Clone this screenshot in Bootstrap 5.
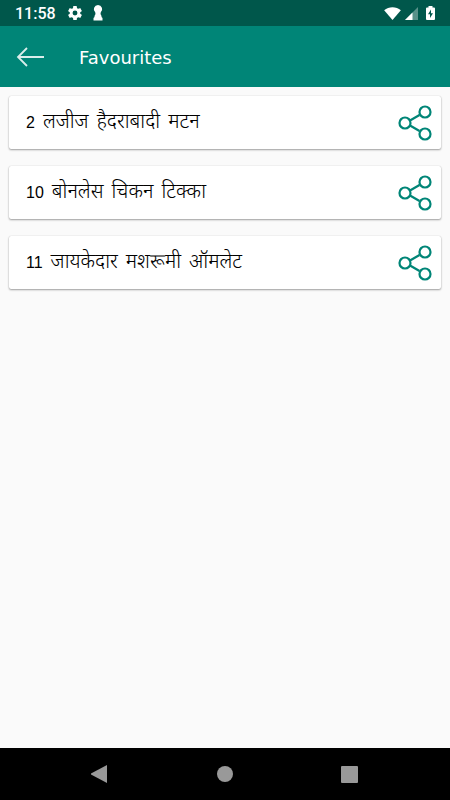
<!DOCTYPE html>
<html lang="hi">
<head>
<meta charset="utf-8">
<meta name="viewport" content="width=device-width, initial-scale=1">
<title>Favourites</title>
<link href="https://cdn.jsdelivr.net/npm/bootstrap@5.3.0/dist/css/bootstrap.min.css" rel="stylesheet">
<style>
body { background: #fafafa; font-family: Roboto, "Noto Sans", sans-serif; }
svg { display: block; flex: none; }
.status-bar { background: #00574b; color: #fff; padding: 0 15px; height: 26px; }
.clock { font-size: 16px; line-height: 24px; padding-top: 2px; font-weight: 500; margin-right: 12px; }
.app-bar { background: #008577; height: 61px; padding: 0 16px; gap: 34px; }
.app-title { font: 18px/24px "DejaVu Sans", sans-serif; color: #fff; padding-top: 2px; }
.recipes { padding: 9px; gap: 17px; }
.recipe { border: 0; border-radius: 2px; height: 53px; padding: 0 8px 0 17px; box-shadow: 0 1px 2px rgba(0,0,0,.36), 0 0 1px rgba(0,0,0,.2); }
.recipe-link { gap: 8px; font: 300 20px/24px "Noto Sans Devanagari", "Noto Sans", sans-serif; color: #000; padding-top: 1px; }
.recipe-number { font: 16px/24px "Liberation Sans", sans-serif; }
.nav-bar { background: #000; height: 52px; padding: 0 91px 0 90px; }
</style>
<script src="https://cdn.jsdelivr.net/npm/bootstrap@5.3.0/dist/js/bootstrap.bundle.min.js"></script>
</head>
<body class="d-flex flex-column min-vh-100">
<svg class="d-none" aria-hidden="true"><symbol id="share" viewBox="0 0 36 36"><g fill="none" stroke="#008577" stroke-width="2.200"><path d="M13 15.500 22.500 10M13 20.500 22.500 26"/><circle cx="8" cy="18" r="5.500"/><circle cx="28" cy="7" r="5.500"/><circle cx="28" cy="29" r="5.500"/></g></symbol></svg>
<div class="status-bar d-flex align-items-center">
  <span class="clock">11:58</span>
  <svg width="14" height="14" viewBox="2 2 20 20" fill="#fff" aria-hidden="true"><path d="M19.430 12.980c.04-.32.070-.64.070-.98s-.03-.66-.07-.98l2.110-1.650c.19-.15.24-.42.120-.64l-2-3.460c-.12-.22-.39-.3-.61-.22l-2.490 1c-.52-.4-1.080-.73-1.690-.98l-.38-2.650A.49.490 0 0 0 14 2h-4c-.25 0-.46.180-.49.420l-.38 2.650c-.61.250-1.170.590-1.690.980l-2.490-1c-.23-.09-.49 0-.61.220l-2 3.460c-.13.220-.07.490.120.640l2.110 1.650c-.04.320-.07.650-.07.980s.03.660.070.980l-2.110 1.650c-.19.150-.24.420-.12.640l2 3.460c.12.220.39.300.61.220l2.490-1c.52.400 1.080.730 1.690.980l.38 2.650c.03.240.24.420.49.420h4c.25 0 .46-.18.490-.42l.38-2.650c.61-.25 1.170-.59 1.690-.98l2.490 1c.23.090.49 0 .61-.22l2-3.460c.12-.22.070-.49-.12-.64zM12 15.500a3.500 3.500 0 1 1 0-7 3.500 3.500 0 0 1 0 7z"/></svg>
  <svg class="ms-2" width="16" height="16" viewBox="0 0 16 16" fill="#fff" aria-hidden="true"><path d="M8 0a4.200 4.200 0 0 1 2.800 7.300L10.500 9l1 2v1l1 1v2.500h-9V13l1-1v-1l1-2-.3-1.700A4.200 4.200 0 0 1 8 0z"/></svg>
  <svg class="ms-auto" width="17" height="13" viewBox="0 0 18 14" fill="#fff" aria-hidden="true"><path d="M0 3.500C5-.8 13-.8 18 3.500L9 14z"/></svg>
  <svg class="ms-1" width="13" height="13" viewBox="0 0 13 13" fill="#fff" aria-hidden="true"><path opacity=".35" d="M13 0v13H0z"/><path d="M7.500 5.500V13H0z"/></svg>
  <svg class="ms-2" width="9" height="14" viewBox="0 0 9 14" aria-hidden="true"><path fill="#fff" d="M2.500 0h4v1.500H8q1 0 1 1V13q0 1-1 1H1q-1 0-1-1V2.500q0-1 1-1h1.500z"/><path fill="#00574b" d="M5 3.500 2 8.300h2V12l3-4.800H5z"/></svg>
</div>
<header class="app-bar d-flex align-items-center">
  <button class="btn p-0 border-0" type="button" aria-label="Back"><svg width="29" height="20" viewBox="0 0 29 20" fill="none" stroke="#fff" stroke-opacity=".85" stroke-width="1.800" aria-hidden="true"><path d="M11 1 2 10l9 9M2 10h26"/></svg></button>
  <h1 class="app-title m-0">Favourites</h1>
</header>
<main class="recipes d-flex flex-column flex-grow-1">
  <article class="recipe card flex-row align-items-center justify-content-between">
    <a class="recipe-link d-flex text-decoration-none" href="#r2"><span class="recipe-number">2</span> <span>लजीज</span> <span>हैदराबादी</span> <span>मटन</span></a>
    <button class="btn p-0 border-0" type="button" aria-label="Share"><svg width="36" height="36"><use href="#share"/></svg></button>
  </article>
  <article class="recipe card flex-row align-items-center justify-content-between">
    <a class="recipe-link d-flex text-decoration-none" href="#r10"><span class="recipe-number">10</span> <span>बोनलेस</span> <span>चिकन</span> <span>टिक्का</span></a>
    <button class="btn p-0 border-0" type="button" aria-label="Share"><svg width="36" height="36"><use href="#share"/></svg></button>
  </article>
  <article class="recipe card flex-row align-items-center justify-content-between">
    <a class="recipe-link d-flex text-decoration-none" href="#r11"><span class="recipe-number">11</span> <span>जायकेदार</span> <span>मशरूमी</span> <span>ऑमलेट</span></a>
    <button class="btn p-0 border-0" type="button" aria-label="Share"><svg width="36" height="36"><use href="#share"/></svg></button>
  </article>
</main>
<nav class="nav-bar d-flex align-items-center justify-content-between" aria-label="System">
  <button class="btn p-0 border-0" type="button" aria-label="Back"><svg width="18" height="18" fill="#999"><path d="M17 0v18L1 9.500v-1z"/></svg></button>
  <button class="btn p-0 border-0" type="button" aria-label="Home"><svg width="18" height="18" fill="#999"><circle cx="9" cy="9" r="8"/></svg></button>
  <button class="btn p-0 border-0" type="button" aria-label="Recents"><svg width="18" height="18" fill="#999"><rect x="0" y="1" width="17" height="17" rx="1"/></svg></button>
</nav>
</body>
</html>
